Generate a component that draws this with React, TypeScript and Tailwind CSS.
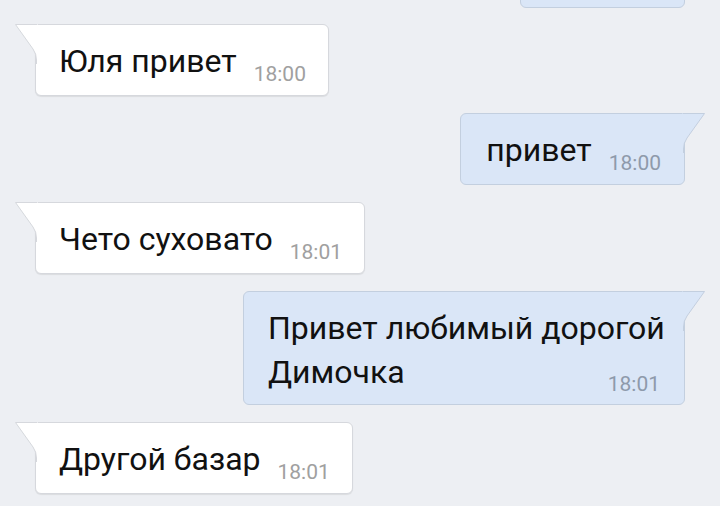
import React from "react";

const font = { fontFamily: "Roboto, 'Noto Sans', sans-serif" };

function InTail() {
  return (
    <svg
      className="absolute left-[-21px] top-[-1px]"
      width="23"
      height="40"
      viewBox="0 0 23 40"
    >
      <path
        d="M22 0.5 L0.5 0.5 L18 25 Q21.5 30 21.5 36 L21.5 40 L23 40 L23 0.5 Z"
        fill="#ffffff"
      />
      <path
        d="M22 0.5 L0.5 0.5 L18 25 Q21.5 30 21.5 36 L21.5 40"
        fill="none"
        stroke="#d6d8dd"
        strokeWidth="1"
      />
    </svg>
  );
}

function OutTail() {
  return (
    <svg
      className="absolute right-[-21px] top-[-1px]"
      width="23"
      height="40"
      viewBox="0 0 23 40"
    >
      <path
        d="M1 0.5 L22.5 0.5 L5 25 Q1.5 30 1.5 36 L1.5 40 L0 40 L0 0.5 Z"
        fill="#dae6f7"
      />
      <path
        d="M1 0.5 L22.5 0.5 L5 25 Q1.5 30 1.5 36 L1.5 40"
        fill="none"
        stroke="#c3cfdf"
        strokeWidth="1"
      />
    </svg>
  );
}

function InBubble({ text, time }: { text: string; time: string }) {
  return (
    <div className="relative self-start ml-[35px] bg-white border border-[#d6d8dd] rounded-[6px] rounded-tl-none shadow-[0_1px_1px_rgba(0,0,0,0.08)] pl-[23px] pr-[22px] pt-[14px] pb-[12px] flex items-baseline whitespace-nowrap">
      <InTail />
      <span className="text-[32px] leading-[44px] text-[#111111]">{text}</span>
      <span className="relative top-[9px] ml-[17px] text-[21px] leading-[20px] text-[#a0a0a0]">
        {time}
      </span>
    </div>
  );
}

function OutBubble({ text, time }: { text: string; time: string }) {
  return (
    <div className="relative self-end mr-[35px] bg-[#dae6f7] border border-[#c3cfdf] rounded-[6px] rounded-tr-none pl-[25px] pr-[23px] pt-[14px] pb-[12px] flex items-baseline whitespace-nowrap">
      <OutTail />
      <span className="text-[32px] leading-[44px] text-[#111111]">{text}</span>
      <span className="relative top-[9px] ml-[17px] text-[21px] leading-[20px] text-[#8e9aab]">
        {time}
      </span>
    </div>
  );
}

export default function App() {
  return (
    <div
      className="w-[720px] h-[506px] overflow-hidden bg-[#edeff3] relative"
      style={font}
    >
      <div className="absolute left-[520px] top-[-40px] w-[165px] h-[48px] bg-[#dae6f7] border border-[#c3cfdf] rounded-[6px]" />
      <div className="flex flex-col gap-[17px] pt-[24px]">
        <InBubble text="Юля привет" time="18:00" />
        <OutBubble text="привет" time="18:00" />
        <InBubble text="Чето суховато" time="18:01" />
        <div className="relative self-end mr-[35px] w-[442px] bg-[#dae6f7] border border-[#c3cfdf] rounded-[6px] rounded-tr-none pl-[24px] pr-[24px] pt-[14px] pb-[10px] flex flex-col whitespace-nowrap">
          <OutTail />
          <span className="text-[32px] leading-[44px] text-[#111111]">
            Привет любимый дорогой
            <br />
            Димочка
          </span>
          <span className="self-end mt-[-20px] text-[21px] leading-[20px] text-[#8e9aab]">
            18:01
          </span>
        </div>
        <InBubble text="Другой базар" time="18:01" />
      </div>
    </div>
  );
}
